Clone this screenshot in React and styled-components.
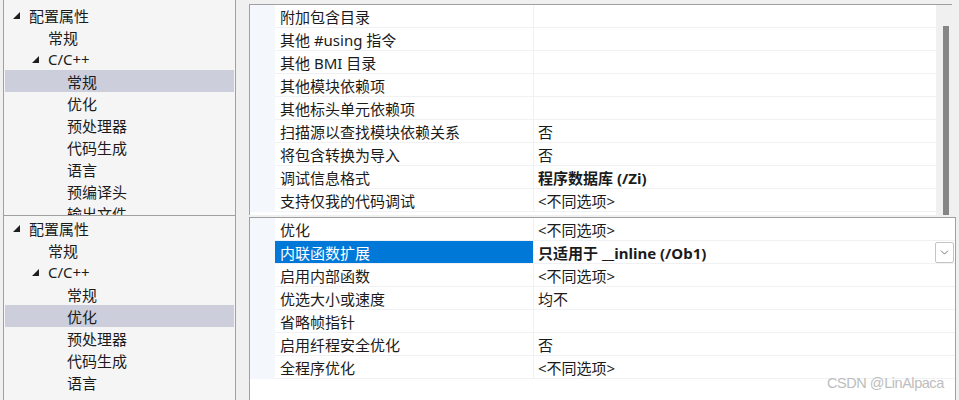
import React from "react";
import styled, { createGlobalStyle } from "styled-components";
import { ChevronDown } from "lucide-react";

const GlobalStyle = createGlobalStyle`
  *, *::before, *::after { box-sizing: border-box; }
  html, body { margin: 0; padding: 0; }
  body {
    background: #f0f0f0;
    font-family: "Noto Sans", "Noto Sans CJK SC", sans-serif;
    font-size: 15px;
    color: #1b1b1b;
  }
`;

const Page = styled.div`
  position: relative;
  width: 959px;
  height: 400px;
  overflow: hidden;
  display: flex;
  flex-direction: column;
`;

const Panel = styled.div`
  display: flex;
  height: ${(p) => p.$height}px;
  padding: 0 ${(p) => p.$right}px 0 3px;
  overflow: hidden;
  flex-shrink: 0;
`;

const Tree = styled.div`
  width: 233px;
  border-left: 1px solid #a0a0a0;
  border-right: 1px solid #a0a0a0;
  border-top: ${(p) => (p.$bordered ? "1px solid #a0a0a0" : "none")};
  padding: ${(p) => p.$padTop}px 1px 0;
  background: #f5f5f5;
`;

const TreeRow = styled.div`
  display: flex;
  align-items: center;
  height: 22px;
  padding-left: ${(p) => 8 + p.$level * 19}px;
  background: ${(p) => (p.$selected ? "#cccedb" : "transparent")};
  white-space: nowrap;
`;

const Expander = styled.span`
  width: 16px;
  height: 22px;
  display: flex;
  align-items: center;
  flex-shrink: 0;
`;

const Grid = styled.div`
  flex: 1;
  margin: ${(p) => p.$top}px 0 0 13px;
  border-top: 1px solid #a0a0a0;
  border-left: 1px solid #a0a0a0;
  border-right: ${(p) => (p.$bordered ? "1px solid #a0a0a0" : "none")};
  background: #ffffff;
  display: flex;
`;

const Table = styled.div`
  flex: 1;
  display: flex;
  flex-direction: column;
`;

const Row = styled.div`
  display: grid;
  grid-template-columns: 25px 258px 1fr;
  height: 23px;
  flex-shrink: 0;
`;

const Margin = styled.div`
  background: #f4f7fc;
`;

const NameCell = styled.div`
  display: flex;
  align-items: center;
  padding-left: 5px;
  border-bottom: 1px solid #eff1f5;
  background: ${(p) => (p.$selected ? "#0078d7" : "transparent")};
  color: ${(p) => (p.$selected ? "#ffffff" : "inherit")};
  white-space: nowrap;
`;

const ValueCell = styled.div`
  display: flex;
  align-items: center;
  justify-content: space-between;
  padding-left: 4px;
  border-left: 1px solid #eff1f5;
  border-bottom: 1px solid #eff1f5;
  font-weight: ${(p) => (p.$bold ? 700 : 400)};
  white-space: nowrap;
`;

const DropButton = styled.span`
  width: 19px;
  height: 21px;
  margin-right: 1px;
  border: 1px solid #c4c4c4;
  border-radius: 2px;
  background: #ffffff;
  display: flex;
  align-items: center;
  justify-content: center;
  color: #444444;
`;

const Scrollbar = styled.div`
  width: 16px;
  background: #f0f0f0;
  padding: 21px 0 0 7px;
`;

const Thumb = styled.div`
  width: 6px;
  height: 100%;
  background: #868686;
`;

const Watermark = styled.div`
  position: absolute;
  left: 827px;
  top: 375px;
  font-family: "Liberation Sans", Arial, sans-serif;
  font-size: 14.5px;
  letter-spacing: -0.45px;
  color: #bdbdbd;
`;

const Triangle = () => (
  <svg width="7" height="7" viewBox="0 0 7 7">
    <polygon points="7,0 7,7 0,7" fill="#1e1e1e" />
  </svg>
);

const treeItems = [
  { level: 0, label: "配置属性", open: true },
  { level: 1, label: "常规" },
  { level: 1, label: "C/C++", open: true },
  { level: 2, label: "常规" },
  { level: 2, label: "优化" },
  { level: 2, label: "预处理器" },
  { level: 2, label: "代码生成" },
  { level: 2, label: "语言" },
  { level: 2, label: "预编译头" },
  { level: 2, label: "输出文件" },
];

const topProps = [
  { name: "附加包含目录", value: "" },
  { name: "其他 #using 指令", value: "" },
  { name: "其他 BMI 目录", value: "" },
  { name: "其他模块依赖项", value: "" },
  { name: "其他标头单元依赖项", value: "" },
  { name: "扫描源以查找模块依赖关系", value: "否" },
  { name: "将包含转换为导入", value: "否" },
  { name: "调试信息格式", value: "程序数据库 (/Zi)", bold: true },
  { name: "支持仅我的代码调试", value: "<不同选项>" },
];

const bottomProps = [
  { name: "优化", value: "<不同选项>" },
  { name: "内联函数扩展", value: "只适用于 __inline (/Ob1)", bold: true, selected: true },
  { name: "启用内部函数", value: "<不同选项>" },
  { name: "优选大小或速度", value: "均不" },
  { name: "省略帧指针", value: "" },
  { name: "启用纤程安全优化", value: "否" },
  { name: "全程序优化", value: "<不同选项>" },
];

const TreeView = ({ selected, bordered, padTop, count }) => (
  <Tree $bordered={bordered} $padTop={padTop}>
    {treeItems.slice(0, count).map((item, i) => (
      <TreeRow key={i} $level={item.level} $selected={i === selected}>
        <Expander>{item.open ? <Triangle /> : null}</Expander>
        {item.label}
      </TreeRow>
    ))}
  </Tree>
);

const PropertyGrid = ({ rows, top, bordered, scroll }) => (
  <Grid $top={top} $bordered={bordered}>
    <Table>
      {rows.map((row) => (
        <Row key={row.name}>
          <Margin />
          <NameCell $selected={row.selected}>{row.name}</NameCell>
          <ValueCell $bold={row.bold}>
            <span>{row.value}</span>
            {row.selected ? (
              <DropButton>
                <ChevronDown size={13} strokeWidth={1.3} />
              </DropButton>
            ) : null}
          </ValueCell>
        </Row>
      ))}
    </Table>
    {scroll ? (
      <Scrollbar>
        <Thumb />
      </Scrollbar>
    ) : null}
  </Grid>
);

export default function App() {
  return (
    <Page>
      <GlobalStyle />
      <Panel $height={215} $right={7}>
        <TreeView selected={3} padTop={4} count={10} />
        <PropertyGrid rows={topProps} top={4} scroll />
      </Panel>
      <Panel $height={185} $right={3}>
        <TreeView selected={4} bordered padTop={1} count={8} />
        <PropertyGrid rows={bottomProps} top={2} bordered />
      </Panel>
      <Watermark>CSDN @LinAlpaca</Watermark>
    </Page>
  );
}
